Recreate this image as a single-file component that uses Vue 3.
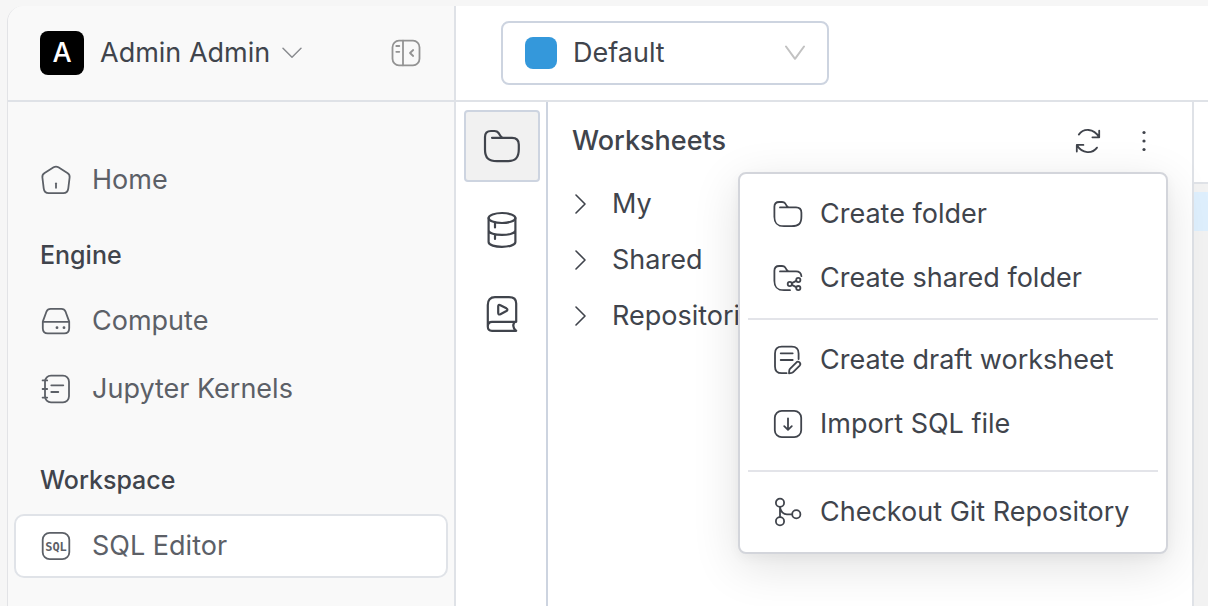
<script setup>
import { ref } from 'vue'

const project = ref('Default')
const sections = [
  { title: '', items: [{ label: 'Home', icon: 'home' }] },
  {
    title: 'Engine',
    items: [
      { label: 'Compute', icon: 'compute' },
      { label: 'Jupyter Kernels', icon: 'notebook' },
    ],
  },
  { title: 'Workspace', items: [{ label: 'SQL Editor', icon: 'sql', active: true }] },
]
const tree = ['My', 'Shared', 'Repositories']
</script>

<template>
  <div class="frame">
    <div class="shell">
      <aside class="sidebar">
        <div class="account">
          <button class="account-btn" type="button">
            <span class="avatar">A</span>
            <span>Admin Admin</span>
            <svg class="caret" width="20" height="12" viewBox="0 0 20 12"><path d="M1 1.2 10 10.2 19 1.2" /></svg>
          </button>
          <button class="icon-btn collapse" type="button" aria-label="Collapse sidebar">
            <svg width="32" height="32" viewBox="0 0 32 32">
              <rect x="2.5" y="3.7" width="27" height="24.6" rx="6.5" />
              <path d="M13 3.7V28.3M6.3 9H9.3M6.3 14.8H9.3M23.2 13 20 16 23.2 19" />
            </svg>
          </button>
        </div>

        <nav class="nav">
          <section v-for="s in sections" :key="s.title" class="group">
            <h2 v-if="s.title">{{ s.title }}</h2>
            <a v-for="item in s.items" :key="item.label" href="#" class="nav-item" :class="{ active: item.active }">
              <svg width="32" height="32" viewBox="0 0 32 32">
                <template v-if="item.icon === 'home'">
                  <path d="M13.6 3.3Q16 1.8 18.4 3.3L27.4 9Q30 10.7 29.6 13.5L28.3 24.4Q27.7 29.2 23.2 29.2H8.8Q4.3 29.2 3.7 24.4L2.4 13.5Q2 10.7 4.6 9Z" />
                  <path d="M16 19.3V23.8" />
                </template>
                <template v-else-if="item.icon === 'compute'">
                  <path d="M2.8 16.6 6.6 6.3Q7.6 3.9 10.6 3.9H21.4Q24.4 3.9 25.4 6.3L29.2 16.6V23.2Q29.2 28.3 24.2 28.3H7.8Q2.8 28.3 2.8 23.2ZM2.8 16.8H29.2" />
                  <circle class="dot" cx="17" cy="22.7" r="1.4" />
                  <circle class="dot" cx="24" cy="22.7" r="1.4" />
                </template>
                <template v-else-if="item.icon === 'notebook'">
                  <rect x="5" y="2.7" width="24" height="26.6" rx="6" />
                  <path d="M2.6 7.4H7.2M2.6 16H7.2M2.6 24.6H7.2M11.3 12.3H23.3M11.3 19H18.3" />
                </template>
                <template v-else>
                  <rect x="2.7" y="2.8" width="26.6" height="26.4" rx="7" />
                  <text x="16" y="20.5" text-anchor="middle">SQL</text>
                </template>
              </svg>
              <span>{{ item.label }}</span>
            </a>
          </section>
        </nav>
      </aside>

      <main class="main">
        <header class="topbar">
          <label class="project">
            <span class="swatch"></span>
            <select v-model="project" aria-label="Project">
              <option>Default</option>
            </select>
            <svg width="20" height="16" viewBox="0 0 20 16"><path d="M1 1.5 10 13.8 19 1.5" /></svg>
          </label>
        </header>

        <div class="body">
          <div class="rail">
            <button class="rail-btn active" type="button" aria-label="Worksheets">
              <svg width="40" height="40" viewBox="0 0 40 40">
                <path d="M10 11.8H30Q36.8 11.8 36.8 18.5V23C36.8 32 33.5 35.2 24.5 35.2H15C6.5 35.2 3 32 3 23.5V11Q3 5 9 5H12.5Q15.2 5 16.6 7L18 9.3Q19.3 11.5 21 11.8" />
              </svg>
            </button>
            <button class="rail-btn" type="button" aria-label="Databases">
              <svg width="40" height="40" viewBox="0 0 40 40">
                <ellipse cx="20" cy="8" rx="13.4" ry="5" />
                <path d="M6.6 8V32C6.6 38.4 33.4 38.4 33.4 32V8M6.6 20.2C6.6 26.4 33.4 26.4 33.4 20.2M13 12.5V17.5M13 24.3V29" />
              </svg>
            </button>
            <button class="rail-btn" type="button" aria-label="Notebooks">
              <svg width="40" height="40" viewBox="0 0 40 40">
                <path d="M5.8 32.5V11Q5.8 3.2 13 3.2H27Q34.2 3.2 34.2 9.5V27.8H10Q5.8 27.8 5.8 32.5Q5.8 36.8 10 36.8H34.2Q29.2 32.5 32.8 27.8" />
                <path d="M16.2 12.6Q16.2 10.2 18.4 11.2L24.4 14.3Q26.4 15.6 24.4 17L18.4 20.2Q16.2 21.2 16.2 18.8Z" />
              </svg>
            </button>
          </div>

          <section class="panel">
            <div class="panel-head">
              <h1>Worksheets</h1>
              <button class="icon-btn" type="button" aria-label="Refresh">
                <svg width="32" height="32" viewBox="0 0 32 32">
                  <path d="M6.8 9.6C11.5 3.2 21.5 2.8 27.2 12.3M20.4 12.3H27.2V5.6M25 22.6C20.5 28.8 10.3 29.2 4.8 20M11.4 19.9H4.8V26.5" />
                </svg>
              </button>
              <button class="icon-btn" type="button" aria-label="More actions">
                <svg width="32" height="32" viewBox="0 0 32 32">
                  <circle class="dot" cx="16" cy="7.5" r="1.6" />
                  <circle class="dot" cx="16" cy="16" r="1.6" />
                  <circle class="dot" cx="16" cy="24.5" r="1.6" />
                </svg>
              </button>
            </div>

            <ul class="tree">
              <li v-for="name in tree" :key="name">
                <button type="button">
                  <svg width="16" height="20" viewBox="0 0 16 20"><path d="M4 1 13 10 4 19" /></svg>
                  <span>{{ name }}</span>
                </button>
              </li>
            </ul>

            <div class="menu" role="menu">
              <button type="button" role="menuitem">
                <svg width="32" height="32" viewBox="0 0 32 32">
                  <path d="M8 9.4H24Q29.4 9.4 29.4 14.8V18.4C29.4 25.6 26.8 28.2 19.6 28.2H12C5.2 28.2 2.4 25.6 2.4 18.8V8.8Q2.4 4 7.2 4H10Q12.2 4 13.3 5.6L14.4 7.4Q15.4 9.2 16.8 9.4" />
                </svg>
                <span>Create folder</span>
              </button>
              <button type="button" role="menuitem">
                <svg width="32" height="32" viewBox="0 0 32 32">
                  <path d="M8 9.4H24Q29 9.4 29.4 14.2M18 28.2H12C5.2 28.2 2.4 25.6 2.4 18.8V8.8Q2.4 4 7.2 4H10Q12.2 4 13.3 5.6L14.4 7.4Q15.4 9.2 16.8 9.4" />
                  <circle cx="17.8" cy="22" r="2.1" />
                  <circle cx="26.3" cy="18" r="2.1" />
                  <circle cx="26.3" cy="26.1" r="2.1" />
                  <path d="M19.8 21.1 24.3 18.9M19.8 22.9 24.3 25.1" />
                </svg>
                <span>Create shared folder</span>
              </button>
              <hr />
              <button type="button" role="menuitem">
                <svg width="32" height="32" viewBox="0 0 32 32">
                  <path d="M26.6 15V9.5Q26.6 2.7 19.8 2.7H9.8Q3 2.7 3 9.5V22.4Q3 29.2 9.8 29.2H14.6M8.7 9.3H20.7M8.7 16H20.7" />
                  <path d="M17 29.3 17.3 26.4Q17.4 25.4 18.2 24.6L24.5 18.3Q26 17 27.6 18.4Q29.1 20.1 27.7 21.6L21.4 27.9Q20.7 28.7 19.6 28.9Z" />
                </svg>
                <span>Create draft worksheet</span>
              </button>
              <button type="button" role="menuitem">
                <svg width="32" height="32" viewBox="0 0 32 32">
                  <rect x="2.8" y="2.8" width="26.4" height="26.4" rx="7" />
                  <path d="M16 10.3V21.6M12.2 18.2 16 21.8 19.8 18.2" />
                </svg>
                <span>Import SQL file</span>
              </button>
              <hr class="wide" />
              <button type="button" role="menuitem">
                <svg width="32" height="32" viewBox="0 0 32 32">
                  <circle cx="8" cy="6.7" r="4.1" />
                  <circle cx="8" cy="25.3" r="4.1" />
                  <circle cx="24.3" cy="18.3" r="4.1" />
                  <path d="M8 10.8V21.2M8 10.8Q9 18.3 15 18.3H20.2" />
                </svg>
                <span>Checkout Git Repository</span>
              </button>
            </div>
          </section>

          <section class="editor">
            <div class="tabs"></div>
            <div class="line"></div>
          </section>
        </div>
      </main>
    </div>
  </div>
</template>

<style>
body {
  background: #f6f6f6;
}
</style>

<style scoped>
* {
  box-sizing: border-box;
}
.frame {
  display: flex;
  min-height: 100vh;
  padding: 6px 0 0 7px;
  overflow: hidden;
  font: 27px/32px Inter, 'Liberation Sans', sans-serif;
  color: #40444c;
}
button,
select {
  padding: 0;
  border: 0;
  background: none;
  font: inherit;
  color: inherit;
  text-align: left;
}
svg {
  flex: none;
  display: block;
  fill: none;
  stroke: currentColor;
  stroke-width: 1.8;
  stroke-linecap: round;
  stroke-linejoin: round;
}
.dot {
  fill: currentColor;
  stroke: none;
}
.shell {
  flex: 1;
  display: flex;
  border-left: 1px solid #e2e3e6;
  border-radius: 16px 0 0 0;
  overflow: hidden;
}
.sidebar {
  flex: none;
  width: 448px;
  border-right: 2px solid #dfe2e7;
  background: #f9f9f9;
}
.account {
  display: flex;
  align-items: center;
  justify-content: space-between;
  height: 96px;
  padding: 0 32px;
  border-bottom: 2px solid #dfe2e7;
}
.account-btn {
  display: flex;
  align-items: center;
  gap: 16px;
}
.avatar {
  width: 44px;
  height: 44px;
  border-radius: 8px;
  background: #000;
  color: #fff;
  font-weight: 500;
  line-height: 44px;
  text-align: center;
}
.caret {
  margin-left: -4px;
  color: #8b8d91;
  stroke-width: 1.5;
}
.collapse {
  color: #939393;
}
.nav {
  padding: 46px 6px 0;
}
.group + .group {
  margin-top: 27px;
}
.group + .group + .group {
  margin-top: 43px;
}
h2 {
  margin: 0 0 18px;
  padding-left: 26px;
  font-size: 25px;
  font-weight: 500;
}
.nav-item {
  display: flex;
  align-items: center;
  gap: 20px;
  height: 64px;
  padding: 0 24px;
  border: 2px solid transparent;
  border-radius: 10px;
  color: #5c6067;
  text-decoration: none;
}
.nav-item + .nav-item {
  margin-top: 4px;
}
.nav-item.active {
  border-color: #e0e3e8;
  background: #fff;
}
.nav-item text {
  fill: currentColor;
  stroke: none;
  font: bold 12px 'Liberation Sans Narrow', 'DejaVu Sans Mono', monospace;
}
.main {
  flex: 1;
  min-width: 0;
  display: flex;
  flex-direction: column;
  background: #fff;
}
.topbar {
  display: flex;
  align-items: center;
  height: 96px;
  padding: 0 45px;
  border-bottom: 2px solid #dfe2e7;
}
.project {
  display: flex;
  align-items: center;
  gap: 16px;
  width: 328px;
  height: 64px;
  padding: 0 22px;
  border: 2px solid #cdd4e0;
  border-radius: 8px;
}
.project select {
  flex: 1;
  min-width: 0;
  appearance: none;
}
.project svg {
  color: #c2c2c2;
  stroke-width: 2;
}
.swatch {
  width: 32px;
  height: 32px;
  border-radius: 8px;
  background: #3498db;
}
.body {
  flex: 1;
  display: flex;
}
.rail {
  flex: none;
  display: flex;
  flex-direction: column;
  gap: 12px;
  width: 92px;
  padding: 8px 6px 8px 8px;
  border-right: 2px solid #cdd4e0;
}
.rail-btn {
  display: grid;
  place-items: center;
  height: 72px;
  border: 2px solid transparent;
  border-radius: 4px;
}
.rail-btn.active {
  border-color: #cdd4e0;
  background: #f1f1f1;
}
.rail-btn svg {
  stroke-width: 2.2;
}
.panel {
  position: relative;
  flex: 1;
  min-width: 0;
  border-right: 2px solid #dfe2e7;
}
.panel-head {
  display: flex;
  align-items: center;
  gap: 24px;
  padding: 23px 32px 19px 24px;
}
h1 {
  flex: 1;
  margin: 0;
  font-size: 27px;
  font-weight: 500;
}
.tree {
  margin: 0;
  padding: 0;
  list-style: none;
}
.tree button {
  display: flex;
  align-items: center;
  gap: 24px;
  width: 100%;
  height: 56px;
  padding-left: 24px;
}
.tree svg {
  stroke-width: 1.6;
}
.menu {
  position: absolute;
  z-index: 1;
  top: 70px;
  right: 24px;
  width: 430px;
  padding: 8px;
  border: 2px solid #d3d5db;
  border-radius: 8px;
  background: #fff;
  box-shadow: 0 12px 48px rgba(0, 0, 0, 0.12), 0 4px 12px rgba(0, 0, 0, 0.04);
}
.menu button {
  display: flex;
  align-items: center;
  gap: 16px;
  width: 100%;
  height: 64px;
  padding: 0 24px;
  white-space: nowrap;
}
.menu hr {
  height: 2px;
  margin: 8px 0;
  border: 0;
  background: #e3e4e9;
}
.menu hr.wide {
  margin-top: 14px;
}
.editor {
  flex: none;
  width: 14px;
  background: #f2f2f2;
}
.tabs {
  height: 82px;
  border-bottom: 2px solid #dfe2e7;
  background: #fff;
}
.line {
  height: 39px;
  margin-top: 8px;
  background: #deeffd;
}
</style>
